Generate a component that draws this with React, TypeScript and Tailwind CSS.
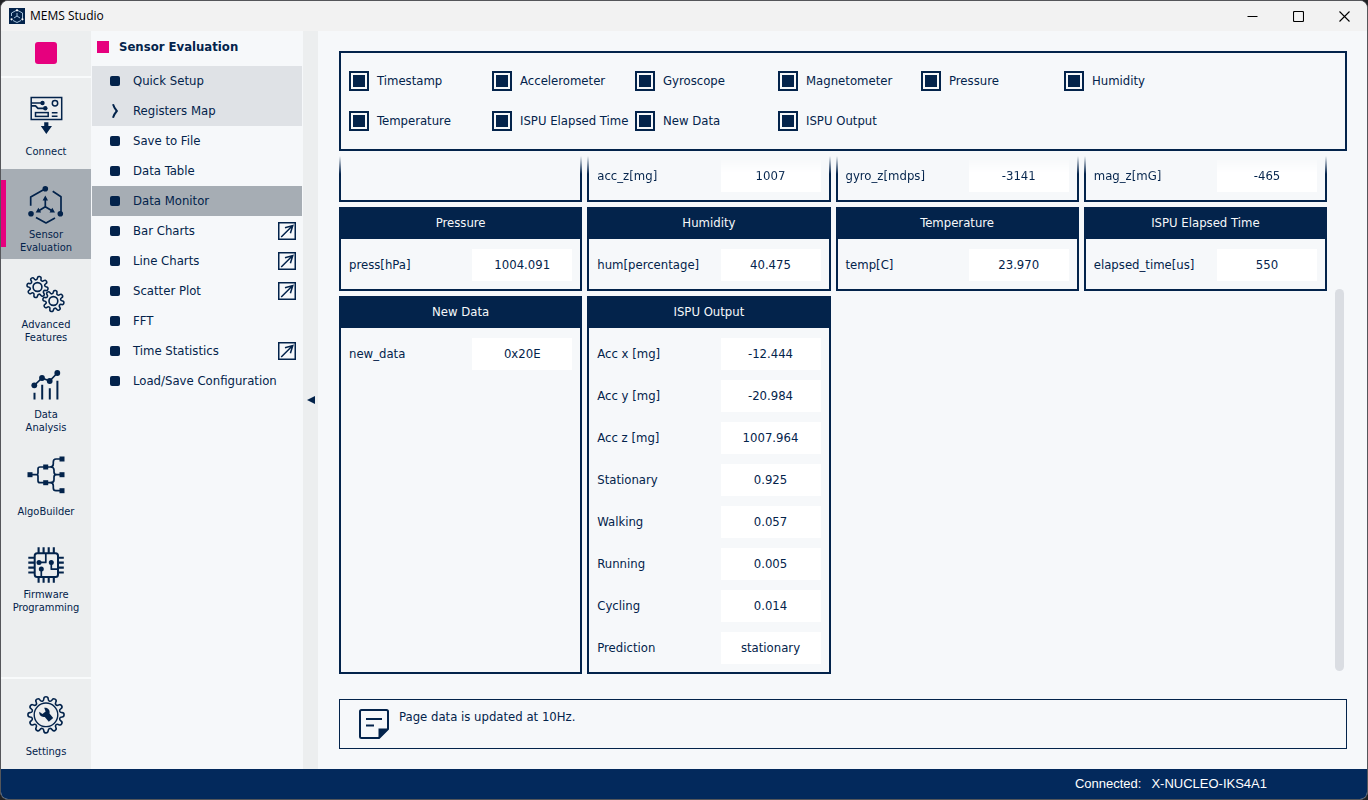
import { useState } from "react";
import type { ReactNode } from "react";

function gearPath(cx: number, cy: number, outer: number, inner: number, teeth: number, turn = 0): string {
  const step = (Math.PI * 2) / teeth;
  const points: [number, number][] = [];
  for (let i = 0; i < teeth; i++) {
    const a = i * step + turn;
    const corners: [number, number][] = [
      [a - step * 0.3, inner],
      [a - step * 0.22, outer],
      [a + step * 0.22, outer],
      [a + step * 0.3, inner],
    ];
    for (const [angle, r] of corners) {
      points.push([cx + r * Math.sin(angle), cy - r * Math.cos(angle)]);
    }
  }
  const at = (i: number) => points[i % points.length];
  const mid = (i: number) => {
    const [x1, y1] = at(i);
    const [x2, y2] = at(i + 1);
    return `${((x1 + x2) / 2).toFixed(2)} ${((y1 + y2) / 2).toFixed(2)}`;
  };
  let d = `M${mid(0)}`;
  for (let i = 1; i <= points.length; i++) {
    const [x, y] = at(i);
    d += `Q${x.toFixed(2)} ${y.toFixed(2)} ${mid(i)}`;
  }
  return `${d}Z`;
}

function Glyph({ children }: { children: ReactNode }) {
  return (
    <svg
      viewBox="0 0 40 40"
      className="size-10 shrink-0"
      fill="none"
      stroke="currentColor"
      strokeWidth="1.7"
      strokeLinejoin="round"
      aria-hidden="true"
    >
      {children}
    </svg>
  );
}

const ConnectIcon = () => (
  <Glyph>
    <rect x="5.2" y="2.5" width="30.5" height="22" strokeWidth="1.5" strokeLinejoin="miter" />
    <path d="M5 8H16M5 10.8H9.5L12 13.3H18" strokeWidth="1.7" />
    <circle cx="16.5" cy="8" r="2.2" fill="currentColor" stroke="none" />
    <circle cx="19.3" cy="13.3" r="2.2" fill="currentColor" stroke="none" />
    <circle cx="29" cy="8.3" r="2.7" strokeWidth="1.5" />
    <rect x="9.5" y="17.6" width="12.7" height="3.8" strokeWidth="1.5" strokeLinejoin="miter" />
    <path d="M25.8 17.8H31.5M25.8 21.2H31.5" strokeWidth="1.4" />
    <path d="M18.2 27.3H22.4V31H26L20.3 39L14.8 31H18.2Z" fill="currentColor" stroke="none" />
  </Glyph>
);

const SensorIcon = () => (
  <Glyph>
    <path d="M4.7 20.7V12L19.3 3.7M26.7 6.3L35 11.7V28M10 32.5L20 38L29 33" />
    <g fill="currentColor" stroke="none">
      <circle cx="19.3" cy="3.7" r="2.8" />
      <circle cx="5" cy="28.7" r="2.8" />
      <circle cx="34.3" cy="28.7" r="2.8" />
      <path d="M19.3 10.5L22 15.5H16.6ZM9.7 27.6L12.4 22.8L15.2 27.4ZM29 27.6L26.3 22.8L23.5 27.4Z" />
    </g>
    <path d="M19.3 21.7V13M19.3 21.7L12 26.2M19.3 21.7L26.8 26.2" />
  </Glyph>
);

const GearsIcon = () => (
  <Glyph>
    <path d={gearPath(11.5, 12, 10.8, 7.4, 8, 0.2)} strokeWidth="1.6" />
    <circle cx="11.5" cy="12" r="4.4" strokeWidth="1.6" />
    <path d={gearPath(27.4, 26, 10.8, 7.4, 8, 0.2)} strokeWidth="1.6" />
    <circle cx="27.4" cy="26" r="4.4" strokeWidth="1.6" />
  </Glyph>
);

const AnalysisIcon = () => (
  <Glyph>
    <path d="M8.3 20.3L16 13L23.7 16L31.3 8" />
    <g fill="currentColor" stroke="none">
      <circle cx="8.3" cy="20.3" r="2.9" />
      <circle cx="16" cy="13" r="2.9" />
      <circle cx="23.7" cy="16" r="2.9" />
      <circle cx="31.3" cy="8" r="2.9" />
    </g>
    <path d="M8.5 27.7V34.5M16.2 19.7V34.5M23.8 23.3V34.5M31.4 15.7V34.5" strokeWidth="2" />
  </Glyph>
);

const AlgoIcon = () => (
  <Glyph>
    <path d="M4 19.7H10.5Q12 19.7 12 18V14Q12 12 14 12H24Q27.3 12 27.3 9V7Q27.3 4 30 4H36M10.5 19.7Q12 19.7 12 21.5V25.7Q12 27.7 14 27.7H24Q27.3 27.7 27.3 30.7V33Q27.3 35.7 30 35.7H36M24.5 12Q28 12 28 15V17Q28 19.7 31 19.7H36M24.5 27.7Q28 27.7 28 24.7V22Q28 19.7 31 19.7" />
    <g fill="currentColor" stroke="none">
      <rect x="1.5" y="17.2" width="5" height="5" />
      <rect x="17.2" y="9.5" width="5" height="5" />
      <rect x="17.2" y="25.2" width="5" height="5" />
      <rect x="33.5" y="1.5" width="5" height="5" />
      <rect x="33.5" y="17.2" width="5" height="5" />
      <rect x="33.5" y="33.2" width="5" height="5" />
    </g>
  </Glyph>
);

const ChipIcon = () => (
  <Glyph>
    <rect x="8.7" y="8.3" width="23.3" height="23.7" rx="2.5" strokeWidth="2" />
    <path
      d="M12.6 2.3V8M17.6 2.3V8M22.7 2.3V8M27.8 2.3V8M12.6 32V37.8M17.6 32V37.8M22.7 32V37.8M27.8 32V37.8M2.3 12.7H9M2.3 17.6H9M2.3 22.6H9M2.3 27.5H9M32 12.7H37.8M32 17.6H37.8M32 22.6H37.8M32 27.5H37.8"
      strokeWidth="2.1"
    />
    <path d="M13 17.4H19.8V8.5M25.3 17.4V24.2H32M15.3 24V32" />
    <g fill="currentColor" stroke="none">
      <circle cx="13" cy="17.4" r="2.5" />
      <circle cx="25.3" cy="17.4" r="2.5" />
      <circle cx="15.3" cy="23.9" r="2.5" />
    </g>
  </Glyph>
);

const SettingsIcon = () => (
  <Glyph>
    <path d={gearPath(20, 19.8, 18.2, 14.2, 12)} strokeWidth="1.6" />
    <circle cx="20" cy="19.8" r="11.8" strokeWidth="1.4" />
    <path
      d="M18.2 12.8C21.6 12.2 24.4 15 23.5 18.4L27.2 23L22.8 26.8L18.8 21.9C15.6 22.6 12.8 20 13.3 16.8L16.4 19L19.6 16.6L18.2 12.8Z"
      fill="currentColor"
      stroke="none"
    />
  </Glyph>
);

const tools = [
  { lines: ["Connect"], icon: <ConnectIcon /> },
  { lines: ["Sensor", "Evaluation"], icon: <SensorIcon />, active: true },
  { lines: ["Advanced", "Features"], icon: <GearsIcon /> },
  { lines: ["Data", "Analysis"], icon: <AnalysisIcon /> },
  { lines: ["AlgoBuilder"], icon: <AlgoIcon /> },
  { lines: ["Firmware", "Programming"], icon: <ChipIcon /> },
];

function ToolButton({ lines, icon, active }: { lines: string[]; icon: ReactNode; active?: boolean }) {
  return (
    <button
      type="button"
      className={`relative flex h-[90px] w-full flex-col items-center pt-4 ${active ? "bg-[#a6adb4]" : ""}`}
    >
      {active && <span className="absolute top-[11px] left-0 h-[67px] w-[5px] bg-[#e6007e]" />}
      {icon}
      <span className="mt-[3px] flex h-[26px] flex-col justify-center text-[11px] leading-[13px]">
        {lines.map((line) => (
          <span key={line}>{line}</span>
        ))}
      </span>
    </button>
  );
}

const pages = [
  { name: "Quick Setup", shaded: true },
  { name: "Registers Map", shaded: true, expandable: true },
  { name: "Save to File" },
  { name: "Data Table" },
  { name: "Data Monitor", active: true },
  { name: "Bar Charts", detachable: true },
  { name: "Line Charts", detachable: true },
  { name: "Scatter Plot", detachable: true },
  { name: "FFT" },
  { name: "Time Statistics", detachable: true },
  { name: "Load/Save Configuration" },
];

function PageLinks() {
  return (
    <ul>
      {pages.map((p) => (
        <li
          key={p.name}
          className={`flex h-[30px] items-center pr-[6px] pl-[18px] ${
            p.active ? "bg-[#a6adb4]" : p.shaded ? "bg-[#dfe2e6]" : ""
          }`}
        >
          <a href="#" className="flex flex-1 items-center gap-[13px] whitespace-nowrap">
            {p.expandable ? (
              <svg viewBox="0 0 10 16" className="h-4 w-[10px]" fill="none" stroke="currentColor" strokeWidth="2" aria-hidden="true">
                <path d="M3 1.2Q4.2 5 6.8 8Q4.2 11 3 14.8" />
              </svg>
            ) : (
              <span className="size-[10px] rounded-[2px] bg-[#03234b]" />
            )}
            {p.name}
          </a>
          {p.detachable && (
            <button type="button" aria-label={`Open ${p.name} in a window`}>
              <svg viewBox="0 0 18 18" className="size-[18px]" fill="none" stroke="currentColor" strokeWidth="1.5" aria-hidden="true">
                <rect x="0.75" y="0.75" width="16.5" height="16.5" />
                <path d="M3.2 15L14 4.2M7 5.8L14.8 3.5L12.4 11.2" />
              </svg>
            </button>
          )}
        </li>
      ))}
    </ul>
  );
}

const sources = [
  "Timestamp",
  "Accelerometer",
  "Gyroscope",
  "Magnetometer",
  "Pressure",
  "Humidity",
  "Temperature",
  "ISPU Elapsed Time",
  "New Data",
  "ISPU Output",
];

function SourcePicker() {
  const [hidden, setHidden] = useState<string[]>([]);
  const toggle = (name: string) =>
    setHidden((h) => (h.includes(name) ? h.filter((n) => n !== name) : [...h, name]));
  return (
    <div className="flex flex-wrap gap-y-5 border-2 border-[#03234b] px-2 py-[18px]">
      {sources.map((name) => (
        <label key={name} className="flex h-5 w-[143px] items-center gap-2 whitespace-nowrap">
          <input
            type="checkbox"
            checked={!hidden.includes(name)}
            onChange={() => toggle(name)}
            className="size-5 shrink-0 appearance-none border-2 border-[#03234b] bg-clip-content p-[2px] checked:bg-[#03234b]"
          />
          {name}
        </label>
      ))}
    </div>
  );
}

type Reading = [string, string];

function Readings({ rows }: { rows: Reading[] }) {
  return (
    <dl className="flex flex-col gap-[10px]">
      {rows.map(([name, value]) => (
        <div key={name} className="flex h-8 items-center justify-between">
          <dt>{name}</dt>
          <dd className="flex h-full w-[100px] items-center justify-center bg-white">{value}</dd>
        </div>
      ))}
    </dl>
  );
}

const scrolled: Reading[][] = [
  [],
  [["acc_z[mg]", "1007"]],
  [["gyro_z[mdps]", "-3141"]],
  [["mag_z[mG]", "-465"]],
];

const cards: { title: string; rows: Reading[] }[] = [
  { title: "Pressure", rows: [["press[hPa]", "1004.091"]] },
  { title: "Humidity", rows: [["hum[percentage]", "40.475"]] },
  { title: "Temperature", rows: [["temp[C]", "23.970"]] },
  { title: "ISPU Elapsed Time", rows: [["elapsed_time[us]", "550"]] },
  { title: "New Data", rows: [["new_data", "0x20E"]] },
  {
    title: "ISPU Output",
    rows: [
      ["Acc x [mg]", "-12.444"],
      ["Acc y [mg]", "-20.984"],
      ["Acc z [mg]", "1007.964"],
      ["Stationary", "0.925"],
      ["Walking", "0.057"],
      ["Running", "0.005"],
      ["Cycling", "0.014"],
      ["Prediction", "stationary"],
    ],
  },
];

function Monitor() {
  return (
    <div className="flex flex-1 gap-2 pr-[3px]">
      <div className="flex-1">
        <div className="mb-[5px] grid grid-cols-4 gap-[5px] [mask-image:linear-gradient(to_bottom,transparent,black_18px)]">
          {scrolled.map((rows, i) => (
            <div key={i} className="border-2 border-t-0 border-[#03234b] px-2 pt-1 pb-2">
              <Readings rows={rows} />
            </div>
          ))}
        </div>
        <div className="grid grid-cols-4 gap-[5px]">
          {cards.map((card) => (
            <section key={card.title} className="border-2 border-t-0 border-[#03234b]">
              <h2 className="flex h-8 items-center justify-center bg-[#03234b] text-[#f6f8fa]">{card.title}</h2>
              <div className="px-2 pt-[10px] pb-2">
                <Readings rows={card.rows} />
              </div>
            </section>
          ))}
        </div>
      </div>
      <div className="mt-[133px] h-[382px] w-[9px] rounded-full bg-[#dadde2]" />
    </div>
  );
}

function TitleBar() {
  return (
    <header className="flex h-[30px] items-center bg-[#f2f2f2] pl-2 text-black">
      <svg viewBox="0 0 16 16" className="size-4" fill="none" stroke="#b8d4ec" strokeWidth="0.9" aria-hidden="true">
        <rect width="16" height="16" fill="#03234b" stroke="none" />
        <path d="M2.5 8V5L8 2L13.5 5V11.5M4 12.5L8 14.5L12 12.5M8 8V5M8 8L5 10M8 8L11 10" />
        <g fill="#fff" stroke="none">
          <circle cx="8" cy="2.3" r="1.1" />
          <circle cx="2.6" cy="11.3" r="1.1" />
          <circle cx="13.4" cy="11.3" r="1.1" />
        </g>
      </svg>
      <h1 className="ml-[5px] flex-1 font-['Open_Sans','Noto_Sans',sans-serif] text-[12px] leading-4">MEMS Studio</h1>
      <div className="flex">
        {[
          { label: "Minimize", d: "M0.5 5.5H10.5" },
          { label: "Maximize", d: "M1.5 0.5H9.5Q10.5 0.5 10.5 1.5V9.5Q10.5 10.5 9.5 10.5H1.5Q0.5 10.5 0.5 9.5V1.5Q0.5 0.5 1.5 0.5Z" },
          { label: "Close", d: "M0.5 0.5L10.5 10.5M10.5 0.5L0.5 10.5" },
        ].map((b) => (
          <button key={b.label} type="button" aria-label={b.label} className="flex h-[30px] w-[46px] items-center justify-center">
            <svg viewBox="0 0 11 11" className="size-[11px]" fill="none" stroke="#000" strokeWidth="1.1" aria-hidden="true">
              <path d={b.d} />
            </svg>
          </button>
        ))}
      </div>
    </header>
  );
}

export default function App() {
  return (
    <div className="min-h-screen bg-[#202124]">
      <div className="flex min-h-screen flex-col overflow-hidden rounded-lg border border-[#55565a] bg-[#f6f8fa] font-['DejaVu_Sans_Condensed','DejaVu_Sans',sans-serif] text-[13px] leading-4 text-[#03234b]">
        <TitleBar />
        <div className="flex flex-1">
          <nav aria-label="Tools" className="flex w-[90px] shrink-0 flex-col bg-[#eceeef]">
            <div className="flex h-[47px] justify-center border-b-2 border-[#f8fafb] pt-[11px]">
              <button type="button" aria-label="Stop" className="size-[22px] rounded-[3px] bg-[#e6007e]" />
            </div>
            <div className="mt-px flex-1">
              {tools.map((t) => (
                <ToolButton key={t.lines[0]} {...t} />
              ))}
            </div>
            <div className="border-t-2 border-[#f8fafb]">
              <ToolButton lines={["Settings"]} icon={<SettingsIcon />} />
            </div>
          </nav>
          <aside className="ml-px w-[211px] shrink-0 pr-px">
            <h2 className="flex h-[35px] items-center gap-[10px] pb-1 pl-[5px] font-bold whitespace-nowrap">
              <span className="size-3 bg-[#e6007e]" />
              Sensor Evaluation
            </h2>
            <PageLinks />
          </aside>
          <button type="button" aria-label="Collapse panel" className="flex w-[15px] shrink-0 items-center justify-center bg-[#eceeef]">
            <svg viewBox="0 0 8 8" className="size-2" fill="currentColor" aria-hidden="true">
              <path d="M0 4L8 0V8Z" />
            </svg>
          </button>
          <main className="flex min-w-0 flex-1 flex-col gap-[5px] py-5 pr-5 pl-[21px]">
            <SourcePicker />
            <Monitor />
            <div className="flex h-[50px] gap-[10px] border border-[#03234b] pt-[9px] pl-[19px]">
              <svg viewBox="0 0 30 30" className="size-[30px]" fill="none" stroke="currentColor" strokeWidth="2" strokeLinejoin="round" aria-hidden="true">
                <path d="M2.5 1H27.5Q29 1 29 2.5V20L20 29H2.5Q1 29 1 27.5V2.5Q1 1 2.5 1Z" />
                <path d="M19.5 19.5H29L19.5 29Z" fill="currentColor" stroke="none" />
                <path d="M7 10H23M7 16.5H15" />
              </svg>
              <p>Page data is updated at 10Hz.</p>
            </div>
          </main>
        </div>
        <footer className="flex h-[30px] items-center justify-end gap-[10px] bg-[#03295c] pr-[100px] font-['Liberation_Sans',Arial,sans-serif] text-[13px] text-white">
          <span>Connected:</span>
          <span>X-NUCLEO-IKS4A1</span>
        </footer>
      </div>
    </div>
  );
}
